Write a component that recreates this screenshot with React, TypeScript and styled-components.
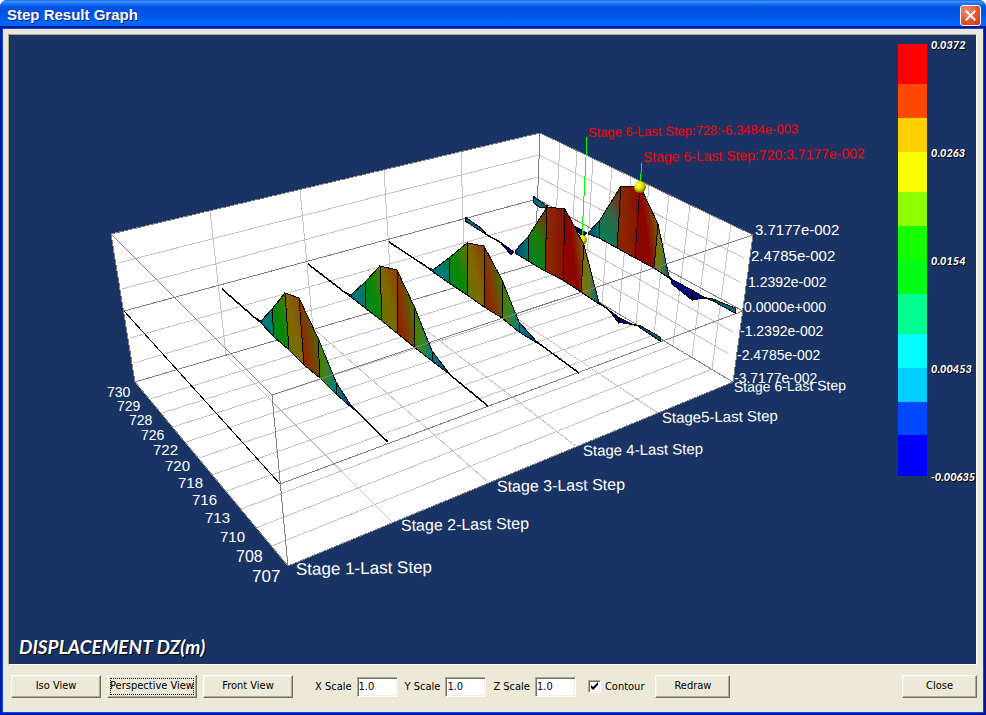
import React, { useState } from 'react';
import styled, { createGlobalStyle, css } from 'styled-components';

const GlobalStyle = createGlobalStyle`
  *, *::before, *::after { box-sizing: border-box; }
  body { margin: 0; background: #ffffff; }
`;

const face = '#ece9d8';
const uiFont = '"DejaVu Sans Condensed", "Noto Sans", sans-serif';

const Window = styled.main`
  display: flex;
  flex-direction: column;
  min-height: 100vh;
  border-radius: 7px 7px 0 0;
  overflow: hidden;
  background: #0038dc;
  font: 11px/14px ${uiFont};
  color: #000;
`;

const TitleBar = styled.header`
  display: flex;
  align-items: center;
  justify-content: space-between;
  height: 29px;
  padding: 1px 5px 0 7px;
  background: linear-gradient(
    #0a50d8 0, #3d95ff 1px, #2a80f8 3px, #0058e6 6px, #0050de 10px,
    #0058ee 17px, #0068ff 22px, #0062f8 26px, #0040c8 29px
  );
`;

const Title = styled.h1`
  margin: 0;
  font: bold 15px/20px "Liberation Sans", sans-serif;
  color: #fff;
  text-shadow: 1px 1px 0 #0a2080;
`;

const CloseBox = styled.button`
  display: grid;
  place-items: center;
  width: 21px;
  height: 21px;
  padding: 0;
  border: 1px solid #fff;
  border-radius: 3px;
  background: radial-gradient(circle at 30% 25%, #f09078 0, #e0532c 55%, #c43a12 100%);
`;

const Body = styled.div`
  display: flex;
  flex: 1;
  flex-direction: column;
  margin: 0 3px 3px;
  padding: 5px 6px 0 5px;
  background: ${face};
  box-shadow: 0 0 0 1px #0048f0, 0 0 0 3px #0018a0;
`;

const Viewport = styled.section`
  display: flex;
  flex: 1;
  border: 1px solid;
  border-color: #aca899 #fff #fff #aca899;
  background: #1a3365;
`;

const Scene = styled.svg`
  display: block;
  flex: 1;
  width: 100%;
  min-width: 0;
`;

const AxisText = styled.text<{ $size: number; $color?: string }>`
  font-family: "Liberation Sans", sans-serif;
  font-size: ${(p) => p.$size}px;
  fill: ${(p) => p.$color ?? '#fff'};
`;

const ShadowText = styled.text<{ $size: number; $weight: number }>`
  font: italic ${(p) => p.$weight} ${(p) => p.$size}px Lato, sans-serif;
  fill: #fff;
  text-shadow: 1px 1px 0 #000;
`;

const Toolbar = styled.footer`
  display: flex;
  align-items: center;
  justify-content: space-between;
  height: 43px;
  margin: 0 0 4px 3px;
`;

const Tools = styled.div`
  display: flex;
  align-items: center;
  gap: 22px;
`;

const ButtonGroup = styled.div`
  display: flex;
  gap: 6px;
`;

const FieldGroup = styled.div`
  display: flex;
  gap: 7px;
`;

const Options = styled.div`
  display: flex;
  align-items: center;
  gap: 11px;
`;

const PushButton = styled.button<{ $wide?: boolean; $active?: boolean }>`
  width: ${(p) => (p.$wide ? 90 : 75)}px;
  height: 23px;
  padding: 0 0 1px;
  border: 1px solid;
  border-color: #fff #716f64 #716f64 #fff;
  background: ${face};
  box-shadow: inset -1px -1px 0 #aca899, inset 1px 1px 0 #f1efe2;
  font: inherit;
  color: inherit;
  white-space: nowrap;
  ${(p) => p.$active && css`
    outline: 1px dotted #000;
    outline-offset: -4px;
  `}
`;

const Field = styled.label`
  display: flex;
  align-items: center;
  gap: 5px;
  white-space: nowrap;
`;

const ScaleInput = styled.input`
  width: 41px;
  height: 20px;
  padding: 1px;
  border: 1px solid;
  border-color: #aca899 #fff #fff #aca899;
  background: #fff;
  box-shadow: inset 1px 1px 0 #716f64, inset -1px -1px 0 #f1efe2;
  font: inherit;
  color: inherit;
`;

const CheckField = styled.label`
  display: flex;
  align-items: center;
  gap: 4px;
  margin-left: -10px;
`;

const CheckStack = styled.span`
  display: grid;
  > * { grid-area: 1 / 1; }
  > svg { pointer-events: none; }
  > input:not(:checked) + svg { visibility: hidden; }
`;

const CheckInput = styled.input`
  appearance: none;
  width: 13px;
  height: 13px;
  margin: 0;
  border: 1px solid;
  border-color: #aca899 #fff #fff #aca899;
  background: #fff;
  box-shadow: inset 1px 1px 0 #716f64, inset -1px -1px 0 #f1efe2;
`;

type Pt = [number, number];
type Line = [number, number, number, number];

const path = (pts: Pt[]) => pts.map((p) => p.join(',')).join(' ');

const wallEdges: Line[] = [
  [111, 234, 540, 133], [540, 133, 753, 235], [753, 235, 733, 382], [733, 382, 288, 566],
  [288, 566, 135, 382], [135, 382, 111, 234], [540, 133, 535, 264], [135, 382, 535, 264],
  [535, 264, 733, 382], [124, 311, 537, 199], [537, 199, 743, 311], [280, 484, 743, 311],
];

const lightLines: Line[] = [
  [118, 263, 539, 155], [122, 289, 538, 177], [130, 338, 537, 222], [134, 363, 536, 243],
  [539, 155, 744, 258], [538, 177, 740, 282], [537, 222, 733, 332], [536, 243, 729, 354],
  [210, 211, 226, 355], [300, 190, 313, 328], [384, 170, 392, 304], [461, 152, 465, 284],
  [226, 355, 393, 523], [313, 328, 489, 483], [392, 304, 577, 447], [465, 284, 658, 413],
];

const floorLeft: Pt[] = [
  [150, 399], [162, 413], [173, 427], [186, 442], [199, 458],
  [212, 475], [227, 491], [241, 509], [256, 528], [272, 546],
];
const wallBottom: Pt[] = [
  [553, 275], [569, 284], [585, 294], [602, 304], [619, 314],
  [636, 324], [654, 335], [673, 345], [692, 357], [712, 369],
];
const wallTop: Pt[] = [
  [560, 142], [577, 151], [593, 158], [612, 167], [631, 176],
  [649, 185], [669, 195], [690, 205], [710, 214], [731, 224],
];

type Series = {
  top: Pt[];
  base: Pt[];
  fills: string[];
  tails: Pt[][];
  wedges: { pts: Pt[]; fill: string }[];
};

const teal = '#00687c';
const navy = '#000084';
const mild = ['tealGreen', 'greenOlive', 'olive', 'brownGreen', 'greenTeal', 'tealBlue'];
const strong = ['blueTeal', 'brownTeal', 'redBrown', 'red', 'oliveTeal'];

const series: Series[] = [
  {
    top: [[588, 233], [600, 220], [621, 186], [640, 186], [658, 224], [669, 277]],
    base: [[588, 234], [599, 238], [617, 248], [635, 258], [654, 268], [669, 278]],
    fills: strong,
    tails: [[[669, 277], [672, 280]], [[705, 298], [713, 299]]],
    wedges: [
      { pts: [[533, 196], [548, 207], [539, 207], [533, 202]], fill: teal },
      { pts: [[574, 226], [587, 233], [582, 237]], fill: navy },
      { pts: [[671, 279], [692, 290], [692, 300], [672, 284]], fill: navy },
      { pts: [[692, 290], [705, 298], [692, 300]], fill: navy },
      { pts: [[705, 298], [713, 299], [713, 301]], fill: teal },
      { pts: [[713, 299], [735, 308], [735, 313], [713, 301]], fill: teal },
    ],
  },
  {
    top: [[515, 251], [528, 237], [547, 207], [565, 209], [584, 245], [599, 303]],
    base: [[515, 253], [528, 261], [545, 271], [563, 280], [581, 292], [599, 304]],
    fills: ['blueTeal', 'brownGreenV', 'redBrown', 'red', 'oliveTeal'],
    tails: [[[487, 235], [500, 242]], [[599, 303], [609, 310]], [[634, 325], [640, 326]]],
    wedges: [
      { pts: [[465, 217], [481, 228], [487, 235], [465, 221]], fill: teal },
      { pts: [[500, 242], [514, 252], [511, 255]], fill: navy },
      { pts: [[609, 310], [618, 317], [618, 322]], fill: navy },
      { pts: [[618, 317], [634, 325], [618, 322]], fill: navy },
      { pts: [[639, 325], [660, 337], [660, 341], [639, 327]], fill: teal },
    ],
  },
  {
    top: [[433, 270], [449, 258], [467, 243], [484, 246], [502, 280], [519, 322], [537, 342]],
    base: [[433, 272], [449, 283], [467, 295], [484, 307], [502, 318], [519, 332], [537, 343]],
    fills: mild,
    tails: [[[389, 242], [427, 267]], [[537, 342], [579, 373]]],
    wedges: [{ pts: [[427, 267], [434, 270], [433, 272]], fill: teal }],
  },
  {
    top: [[351, 295], [365, 282], [380, 266], [397, 270], [414, 306], [432, 351], [449, 373]],
    base: [[351, 297], [365, 308], [382, 321], [398, 334], [414, 347], [432, 361], [449, 374]],
    fills: mild,
    tails: [[[308, 264], [343, 291]], [[449, 374], [488, 406]]],
    wedges: [{ pts: [[343, 291], [351, 295], [351, 297]], fill: teal }],
  },
  {
    top: [[261, 321], [272, 309], [285, 293], [299, 298], [318, 338], [336, 382], [352, 407]],
    base: [[261, 323], [274, 337], [289, 350], [304, 365], [320, 378], [336, 394], [352, 408]],
    fills: mild,
    tails: [[[222, 289], [254, 317]], [[352, 407], [388, 442]]],
    wedges: [{ pts: [[254, 317], [261, 321], [261, 323]], fill: teal }],
  },
];

const gradients: [string, Pt, Pt, string[]][] = [
  ['tealGreen', [0, 1], [1, 0], ['#006688', '#007a74', '#008048']],
  ['greenOlive', [0, 1], [1, 0], ['#008030', '#088808', '#6c7000']],
  ['olive', [0, 1], [1, 0], ['#587c00', '#806800', '#883c00']],
  ['brownGreen', [0, 1], [1, 0.3], ['#8c1800', '#843800', '#308000']],
  ['greenTeal', [0, 0.3], [1, 0.6], ['#447c00', '#3c8420', '#008078']],
  ['tealBlue', [0, 0], [1, 1], ['#008088', '#006088', '#003880']],
  ['blueTeal', [0, 0.5], [1, 0.5], ['#004480', '#006078', '#007a60']],
  ['brownTeal', [0.4, 1], [0.8, 0], ['#008058', '#306848', '#882400']],
  ['brownGreenV', [0.4, 1], [0.8, 0], ['#008028', '#1c7c08', '#882400']],
  ['redBrown', [0, 0.5], [1, 0.5], ['#882c00', '#882000', '#8c0c00']],
  ['red', [0, 0.8], [1, 0.3], ['#8c0800', '#8c0400', '#786c00']],
  ['oliveTeal', [0, 0.4], [1, 0.7], ['#8c6800', '#647c20', '#006080']],
];

const legend: [string, number][] = [
  ['#ff0000', 40], ['#ff4800', 34], ['#ffd000', 34], ['#faff00', 40], ['#90ff00', 34], ['#14ff00', 34],
  ['#00ff14', 34], ['#00ff90', 40], ['#00ffff', 34], ['#00d0ff', 34], ['#0048ff', 33], ['#0000ff', 41],
];

const legendLabels: [string, number][] = [
  ['0.0372', 49], ['0.0263', 157], ['0.0154', 265], ['0.00453', 373], ['-0.00635', 481],
];

type Label = [string, number, number, number];

const nodeLabels: Label[] = [
  ['730', 107, 397, 14], ['729', 117, 411, 14], ['728', 129, 425, 14], ['726', 141, 440, 14],
  ['722', 153, 455, 15], ['720', 165, 471, 15], ['718', 178, 488, 15], ['716', 192, 505, 15],
  ['713', 205, 523, 15], ['710', 220, 542, 15], ['708', 236, 562, 16], ['707', 252, 582, 17],
];

const stageLabels: Label[] = [
  ['Stage 1-Last Step', 296, 575, 17], ['Stage 2-Last Step', 401, 531, 16],
  ['Stage 3-Last Step', 497, 492, 16], ['Stage 4-Last Step', 583, 456, 15],
  ['Stage5-Last Step', 662, 423, 15], ['Stage 6-Last Step', 734, 392, 14],
];

const valueLabels: Label[] = [
  ['3.7177e-002', 755, 235, 15], ['2.4785e-002', 751, 261, 15], ['1.2392e-002', 748, 287, 14],
  ['0.0000e+000', 744, 312, 14], ['-1.2392e-002', 740, 336, 14], ['-2.4785e-002', 737, 360, 14],
  ['-3.7177e-002', 734, 383, 14],
];

const callouts: Label[] = [
  ['Stage 6-Last Step:728:-6.3484e-003', 588, 137, 13],
  ['Stage 6-Last Step:720:3.7177e-002', 643, 162, 14],
];

const Lines = ({ lines }: { lines: Line[] }) => (
  <>
    {lines.map(([x1, y1, x2, y2], i) => (
      <line key={i} x1={x1} y1={y1} x2={x2} y2={y2} />
    ))}
  </>
);

const Labels = ({ items, tilt = 0, color }: { items: Label[]; tilt?: number; color?: string }) => (
  <>
    {items.map(([text, x, y, size]) => (
      <AxisText key={text} x={x} y={y} $size={size} $color={color} transform={`rotate(${tilt} ${x} ${y})`}>
        {text}
      </AxisText>
    ))}
  </>
);

const Ridge = ({ data }: { data: Series }) => (
  <g stroke="#000" strokeWidth="1" fill="none">
    {data.tails.map((t, i) => (
      <polyline key={i} points={path(t)} strokeWidth="1.5" />
    ))}
    {data.wedges.map((w, i) => (
      <polygon key={i} points={path(w.pts)} fill={w.fill} />
    ))}
    {data.fills.map((f, i) => (
      <polygon
        key={i}
        points={path([data.top[i], data.top[i + 1], data.base[i + 1], data.base[i]])}
        fill={`url(#${f})`}
      />
    ))}
  </g>
);

const ResultChart = () => (
  <Scene viewBox="9 35 967 629" role="img" aria-label="Displacement DZ by stage">
    <defs>
      {gradients.map(([id, a, b, colors]) => (
        <linearGradient key={id} id={id} x1={a[0]} y1={a[1]} x2={b[0]} y2={b[1]}>
          {colors.map((c, i) => (
            <stop key={i} offset={i / (colors.length - 1)} stopColor={c} />
          ))}
        </linearGradient>
      ))}
      <radialGradient id="ball" cx="0.4" cy="0.35" r="0.65">
        <stop offset="0" stopColor="#ffff60" />
        <stop offset="0.5" stopColor="#e8e000" />
        <stop offset="1" stopColor="#706c00" />
      </radialGradient>
    </defs>
    <g shapeRendering="crispEdges">
      <polygon points="111,234 540,133 753,235 733,382 288,566 135,382" fill="#fff" />
      <g stroke="#c4c4c4">
        <Lines lines={lightLines} />
        <Lines lines={floorLeft.map((p, i): Line => [...p, ...wallBottom[i]])} />
        <Lines lines={wallTop.map((p, i): Line => [...p, ...wallBottom[i]])} />
      </g>
      <g stroke="#808080">
        <Lines lines={wallEdges} />
      </g>
      <line x1="124" y1="311" x2="280" y2="484" stroke="#000" />
      <Ridge data={series[0]} />
      <g stroke="#00ff00">
        <line x1="587" y1="137" x2="582" y2="236" />
        <line x1="642" y1="163" x2="640" y2="184" />
      </g>
    </g>
    <circle cx="640" cy="187" r="6" fill="url(#ball)" />
    <circle cx="582" cy="240" r="5" fill="url(#ball)" />
    <g shapeRendering="crispEdges">
      {series.slice(1).map((s, i) => (
        <Ridge key={i} data={s} />
      ))}
      <g stroke="#808080">
        <Lines lines={[[111, 234, 272, 395], [272, 395, 288, 566], [272, 395, 753, 235]]} />
      </g>
      {legend.map(([color, height], i) => (
        <rect
          key={color}
          x="898"
          y={44 + legend.slice(0, i).reduce((sum, [, h]) => sum + h, 0)}
          width="29"
          height={height}
          fill={color}
        />
      ))}
    </g>
    <Labels items={nodeLabels} />
    <Labels items={stageLabels} tilt={-1} />
    <Labels items={valueLabels} />
    <Labels items={callouts} tilt={-1} color="#ff0000" />
    {legendLabels.map(([text, y]) => (
      <ShadowText key={text} x="931" y={y} $size={11} $weight={900}>{text}</ShadowText>
    ))}
    <ShadowText x="19" y="654" $size={19} $weight={700}>DISPLACEMENT DZ(m)</ShadowText>
  </Scene>
);

const views = ['Iso View', 'Perspective View', 'Front View'];

export default function App() {
  const [view, setView] = useState('Perspective View');
  return (
    <>
      <GlobalStyle />
      <Window>
        <TitleBar>
          <Title>Step Result Graph</Title>
          <CloseBox type="button" aria-label="Close window">
            <svg width="13" height="13" viewBox="0 0 13 13" stroke="#fff" strokeWidth="2" strokeLinecap="square">
              <path d="M2.5 2.5 10.5 10.5M10.5 2.5 2.5 10.5" />
            </svg>
          </CloseBox>
        </TitleBar>
        <Body>
          <Viewport>
            <ResultChart />
          </Viewport>
          <Toolbar>
            <Tools>
              <ButtonGroup>
                {views.map((name) => (
                  <PushButton key={name} type="button" $wide $active={name === view} onClick={() => setView(name)}>
                    {name}
                  </PushButton>
                ))}
              </ButtonGroup>
              <FieldGroup>
                {['X', 'Y', 'Z'].map((axis) => (
                  <Field key={axis}>
                    {axis} Scale
                    <ScaleInput type="text" defaultValue="1.0" />
                  </Field>
                ))}
              </FieldGroup>
              <Options>
                <CheckField>
                  <CheckStack>
                    <CheckInput type="checkbox" defaultChecked />
                    <svg width="13" height="13" viewBox="0 0 13 13">
                      <path d="M3 5 5 7 10 2V5L5 10 3 8Z" fill="#000" />
                    </svg>
                  </CheckStack>
                  Contour
                </CheckField>
                <PushButton type="button">Redraw</PushButton>
              </Options>
            </Tools>
            <PushButton type="button">Close</PushButton>
          </Toolbar>
        </Body>
      </Window>
    </>
  );
}
